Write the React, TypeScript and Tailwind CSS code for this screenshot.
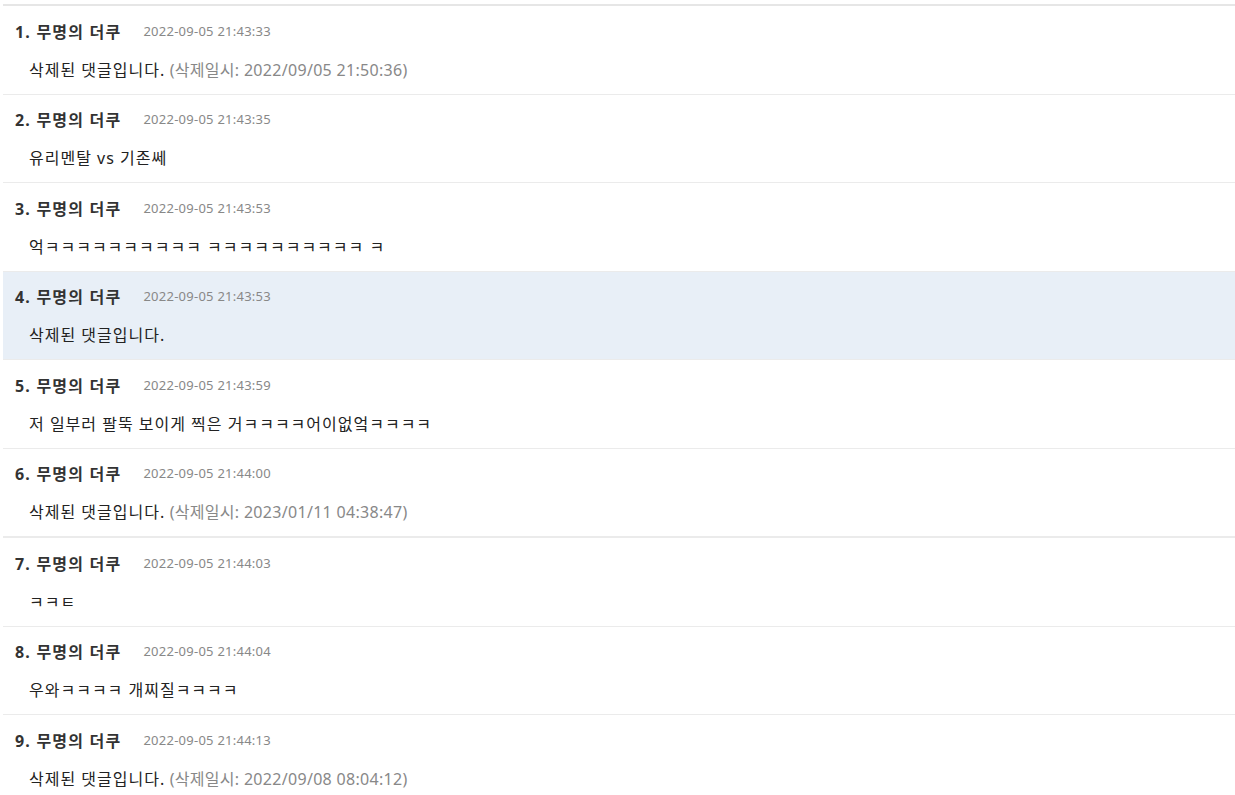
const comments = [
  { no: 1, time: "2022-09-05 21:43:33", text: "삭제된 댓글입니다.", deleted: "2022/09/05 21:50:36" },
  { no: 2, time: "2022-09-05 21:43:35", text: "유리멘탈 vs 기존쎄" },
  { no: 3, time: "2022-09-05 21:43:53", text: "억ㅋㅋㅋㅋㅋㅋㅋㅋㅋㅋ ㅋㅋㅋㅋㅋㅋㅋㅋㅋㅋ ㅋ" },
  { no: 4, time: "2022-09-05 21:43:53", text: "삭제된 댓글입니다.", active: true },
  { no: 5, time: "2022-09-05 21:43:59", text: "저 일부러 팔뚝 보이게 찍은 거ㅋㅋㅋㅋ어이없엌ㅋㅋㅋㅋ" },
  { no: 6, time: "2022-09-05 21:44:00", text: "삭제된 댓글입니다.", deleted: "2023/01/11 04:38:47", thick: true },
  { no: 7, time: "2022-09-05 21:44:03", text: "ㅋㅋㅌ" },
  { no: 8, time: "2022-09-05 21:44:04", text: "우와ㅋㅋㅋㅋ 개찌질ㅋㅋㅋㅋ" },
  { no: 9, time: "2022-09-05 21:44:13", text: "삭제된 댓글입니다.", deleted: "2022/09/08 08:04:12" },
];

type Comment = (typeof comments)[number] & { deleted?: string; active?: boolean; thick?: boolean };

function CommentRow({ c }: { c: Comment }) {
  return (
    <li
      className={`px-3 pt-[15.5px] pb-[13px] ${c.thick ? "border-b-2" : "border-b"} border-[#ebebeb] ${
        c.active ? "bg-[#e8eff7]" : "bg-white"
      }`}
    >
      <div className="flex items-center h-5">
        <span className="text-[16px] tracking-[1.2px] font-bold text-[#333]">{c.no}. 무명의 더쿠</span>
        <span className="ml-[22px] text-[13px] tracking-[0.25px] text-[#888]">{c.time}</span>
      </div>
      <p className="mt-[17px] pl-[14px] text-[16px] tracking-[1px] leading-[22px] text-[#222]">
        {c.text}
        {c.deleted && (
          <span className="tracking-[0.3px] text-[#888]"> (삭제일시: {c.deleted})</span>
        )}
      </p>
    </li>
  );
}

export default function App() {
  return (
    <div
      className="min-h-screen bg-white pt-[4px] pl-[3px]"
      style={{ fontFamily: '"Noto Sans", "Noto Sans CJK KR", sans-serif' }}
    >
      <ul className="border-t-2 border-[#e6e6e6]">
        {comments.map((c) => (
          <CommentRow key={c.no} c={c as Comment} />
        ))}
      </ul>
    </div>
  );
}
